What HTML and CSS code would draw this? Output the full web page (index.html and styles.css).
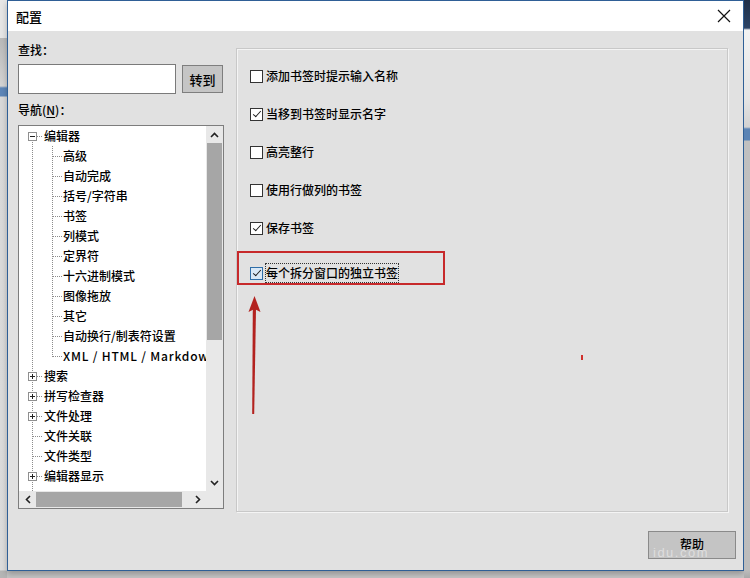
FILE: index.html
```html
<!DOCTYPE html>
<html lang="zh-CN">
  <head>
    <meta charset="UTF-8" />
    <title>配置</title>
    <link rel="stylesheet" href="styles.css">
  </head>
  <body>
    <div class="strip strip-left"></div>

    <div class="dialog">
      <div class="titlebar">
        <span class="title">配置</span>
        <svg class="close" width="14" height="14" viewBox="0 0 14 14">
          <path d="M1 1 L13 13 M13 1 L1 13" stroke="#111" stroke-width="1.2" fill="none" />
        </svg>
      </div>

      <div class="content">
        <div class="side">
          <div class="lbl">查找<span class="colon">：</span></div>
          <div class="search-row">
            <input class="search" type="text" />
            <button class="btn goto">转到</button>
          </div>
          <div class="lbl nav-lbl">导航(<u>N</u>)<span class="colon">：</span></div>

          <div class="treebox">
            <div class="tree">
              <div class="row"><span class="c1 first"><span class="exp minus"></span></span><span class="txt">编辑器</span></div>
              <div class="row"><span class="c1 rail"></span><span class="c2"></span><span class="txt">高级</span></div>
              <div class="row"><span class="c1 rail"></span><span class="c2"></span><span class="txt">自动完成</span></div>
              <div class="row"><span class="c1 rail"></span><span class="c2"></span><span class="txt">括号/字符串</span></div>
              <div class="row"><span class="c1 rail"></span><span class="c2"></span><span class="txt">书签</span></div>
              <div class="row"><span class="c1 rail"></span><span class="c2"></span><span class="txt">列模式</span></div>
              <div class="row"><span class="c1 rail"></span><span class="c2"></span><span class="txt">定界符</span></div>
              <div class="row"><span class="c1 rail"></span><span class="c2"></span><span class="txt">十六进制模式</span></div>
              <div class="row"><span class="c1 rail"></span><span class="c2"></span><span class="txt">图像拖放</span></div>
              <div class="row"><span class="c1 rail"></span><span class="c2"></span><span class="txt">其它</span></div>
              <div class="row"><span class="c1 rail"></span><span class="c2"></span><span class="txt">自动换行/制表符设置</span></div>
              <div class="row"><span class="c1 rail"></span><span class="c2 last"></span><span class="txt latin">XML / HTML / Markdown</span></div>
              <div class="row"><span class="c1"><span class="exp plus"></span></span><span class="txt">搜索</span></div>
              <div class="row"><span class="c1"><span class="exp plus"></span></span><span class="txt">拼写检查器</span></div>
              <div class="row"><span class="c1"><span class="exp plus"></span></span><span class="txt">文件处理</span></div>
              <div class="row"><span class="c1"></span><span class="txt">文件关联</span></div>
              <div class="row"><span class="c1"></span><span class="txt">文件类型</span></div>
              <div class="row"><span class="c1"><span class="exp plus"></span></span><span class="txt">编辑器显示</span></div>
              <div class="row"><span class="c1 rail"></span></div>
            </div>

            <div class="vscroll">
              <span class="sb-btn">
                <svg width="9" height="6" viewBox="0 0 9 6"><path d="M1 5 L4.5 1.5 L8 5" stroke="#222" stroke-width="1.6" fill="none" /></svg>
              </span>
              <span class="v-thumb"></span>
              <span class="sb-track"></span>
              <span class="sb-btn">
                <svg width="9" height="6" viewBox="0 0 9 6"><path d="M1 1 L4.5 4.5 L8 1" stroke="#222" stroke-width="1.6" fill="none" /></svg>
              </span>
            </div>

            <div class="hscroll">
              <span class="sb-btn">
                <svg width="6" height="9" viewBox="0 0 6 9"><path d="M5 1 L1.5 4.5 L5 8" stroke="#222" stroke-width="1.6" fill="none" /></svg>
              </span>
              <span class="h-thumb"></span>
              <span class="sb-track"></span>
              <span class="sb-btn">
                <svg width="6" height="9" viewBox="0 0 6 9"><path d="M1 1 L4.5 4.5 L1 8" stroke="#222" stroke-width="1.6" fill="none" /></svg>
              </span>
            </div>

            <div class="corner"></div>
          </div>
        </div>

        <div class="group">
          <label class="opt"><span class="box"></span>添加书签时提示输入名称</label>
          <label class="opt"><span class="box checked"></span>当移到书签时显示名字</label>
          <label class="opt"><span class="box"></span>高亮整行</label>
          <label class="opt"><span class="box"></span>使用行做列的书签</label>
          <label class="opt"><span class="box checked"></span>保存书签</label>

          <div class="mark">
            <label class="opt focus"><span class="box checked hot"></span><span class="focus-txt">每个拆分窗口的独立书签</span></label>
          </div>

          <svg class="arrow" width="18" height="124" viewBox="0 0 18 124">
            <polygon points="7.5,2 1.5,18 7.5,15 13.5,18" fill="#b3221f" />
            <polygon points="5.8,15 9,15 7.2,120 5.2,120" fill="#b3221f" />
          </svg>
          <span class="dot"></span>
        </div>
      </div>

      <div class="footer">
        <button class="btn help"><span class="wm">idu.com</span><span class="help-txt">帮助</span></button>
      </div>
    </div>

    <div class="strip strip-right"></div>
  </body>
</html>
```

FILE: styles.css
```css
body {
    margin: 0;
    width: 750px;
    height: 578px;
    overflow: hidden;
    display: flex;
    background-color: #c4c4c4;
    font-family: "Noto Sans CJK SC", "Noto Sans", sans-serif;
    font-size: 12px;
    font-weight: 500;
    color: #000;
}

.strip {
    flex: none;
    height: 578px;
}

.strip-left {
    width: 7px;
    background: linear-gradient(to bottom, #e6e6e6 0, #e6e6e6 38px, #b9b9b9 38px, #d4d4d4 86px, #5d86b8 88px, #5d86b8 96px, #d9d9d9 97px, #dcdcdc 570px, #b5b5b5 571px);
}

.strip-right {
    width: 6px;
    background: linear-gradient(to bottom, #1f2f48 0, #2c4466 28px, #f2f2f2 30px, #e4e4e4 100px, #d2d2d2 127px, #5b84b5 129px, #5b84b5 140px, #c0c0c0 141px, #bcbcbc 570px, #a9a9a9 578px);
}

.dialog {
    flex: none;
    width: 737px;
    height: 571px;
    box-sizing: border-box;
    border: 1px solid #2f5f96;
    background-color: #e1e1e1;
    box-shadow: 0 3px 6px rgba(0, 0, 0, 0.25);
    display: flex;
    flex-direction: column;
}

.titlebar {
    height: 30px;
    flex: none;
    background-color: #fff;
    display: flex;
    align-items: center;
    justify-content: space-between;
    padding: 0 12px 0 8px;
}

.title {
    font-size: 13px;
}

.content {
    display: flex;
    gap: 12px;
    padding: 11px 15px 0 10px;
}

/* left column */

.side {
    width: 206px;
    flex: none;
}

.lbl {
    height: 16px;
    line-height: 16px;
}

.colon {
    font-family: "Noto Sans CJK TC", sans-serif;
}

.lbl u {
    text-decoration-thickness: 1px;
    text-underline-offset: 2px;
}

.search-row {
    display: flex;
    align-items: center;
    gap: 6px;
    margin-top: 6px;
}

.search {
    width: 158px;
    height: 30px;
    box-sizing: border-box;
    margin: 0;
    border: 1px solid #7a7a7a;
    background-color: #fff;
}

.btn {
    font-family: inherit;
    font-size: 12px;
    font-weight: 500;
    color: #000;
    background-color: #c5c5c5;
    border: 1px solid #7e7e7e;
    padding: 0;
    margin: 0;
}

.goto {
    width: 41px;
    height: 28px;
    font-size: 13px;
}

.nav-lbl {
    margin-top: 8px;
}

.treebox {
    margin-top: 7px;
    height: 384px;
    box-sizing: border-box;
    border: 1px solid #7d7d7d;
    display: grid;
    grid-template-columns: 187px 17px;
    grid-template-rows: 365px 17px;
}

.tree {
    background-color: #fff;
    overflow: hidden;
    white-space: nowrap;
}

.row {
    height: 20px;
    display: flex;
    align-items: center;
}

.txt {
    line-height: 20px;
}

.latin {
    letter-spacing: 0.8px;
}

.c1,
.c2 {
    flex: none;
    height: 20px;
    display: flex;
    align-items: center;
    background-repeat: no-repeat;
}

.c1 {
    width: 25px;
    background-image:
        repeating-linear-gradient(to right, #8c8c8c 0 1px, transparent 1px 2px),
        repeating-linear-gradient(to bottom, #8c8c8c 0 1px, transparent 1px 2px);
    background-size: 9px 1px, 1px 20px;
    background-position: 14px 10px, 13px 0;
}

.c1.first {
    background-size: 9px 1px, 1px 10px;
    background-position: 14px 10px, 13px 10px;
}

.c1.rail {
    background-size: 0 0, 1px 20px;
}

.c2 {
    width: 19px;
    background-image:
        repeating-linear-gradient(to right, #8c8c8c 0 1px, transparent 1px 2px),
        repeating-linear-gradient(to bottom, #8c8c8c 0 1px, transparent 1px 2px);
    background-size: 9px 1px, 1px 20px;
    background-position: 9px 10px, 8px 0;
}

.c2.last {
    background-size: 9px 1px, 1px 11px;
}

.exp {
    width: 9px;
    height: 9px;
    box-sizing: border-box;
    margin-left: 9px;
    border: 1px solid #8f8f8f;
    background-color: #fff;
    display: flex;
    align-items: center;
    justify-content: center;
    position: relative;
}

.exp::before {
    content: "";
    width: 5px;
    height: 1px;
    background-color: #222;
}

.exp.plus::after {
    content: "";
    position: absolute;
    left: 3px;
    top: 1px;
    width: 1px;
    height: 5px;
    background-color: #222;
}

/* scrollbars */

.vscroll,
.hscroll {
    background-color: #e8e8e8;
    display: flex;
}

.vscroll {
    flex-direction: column;
}

.sb-btn {
    flex: none;
    width: 17px;
    height: 17px;
    display: flex;
    align-items: center;
    justify-content: center;
}

.sb-track {
    flex: 1;
}

.v-thumb {
    flex: none;
    height: 197px;
    margin: 0 1px;
    background-color: #a6a6a6;
}

.h-thumb {
    flex: none;
    width: 146px;
    margin: 1px 0;
    background-color: #a6a6a6;
}

.corner {
    background-color: #e8e8e8;
}

/* options group */

.group {
    margin-top: 6px;
    width: 492px;
    height: 464px;
    box-sizing: border-box;
    border: 1px solid #c8c8c8;
    box-shadow: inset 1px 1px 0 #f4f4f4, 1px 1px 0 #f4f4f4;
    padding: 17px 0 0 13px;
    display: flex;
    flex-direction: column;
    align-items: flex-start;
    position: relative;
}

.opt {
    height: 20px;
    margin-bottom: 18px;
    display: flex;
    align-items: center;
    gap: 3px;
    line-height: 20px;
}

.box {
    width: 13px;
    height: 13px;
    box-sizing: border-box;
    border: 1px solid #333;
    background-color: #fff;
    display: flex;
    align-items: center;
    justify-content: center;
}

.box.checked::before {
    content: "";
    width: 7px;
    height: 3px;
    margin-top: -3px;
    border-left: 1.5px solid #1a1a1a;
    border-bottom: 1.5px solid #1a1a1a;
    transform: rotate(-48deg);
}

.box.hot {
    border-color: #2f6ea8;
    background-color: #d9e8f6;
}

.mark {
    margin: -5px 0 0 -13px;
    width: 208px;
    height: 34px;
    box-sizing: border-box;
    border: 2px solid #c7292b;
    padding: 10px 0 0 11px;
}

.mark .opt {
    margin-bottom: 0;
}

.focus-txt {
    outline: 1px dotted #333;
    line-height: 18px;
}

.arrow {
    position: absolute;
    left: 10px;
    top: 245px;
}

.dot {
    position: absolute;
    left: 344px;
    top: 306px;
    width: 2px;
    height: 5px;
    background-color: #d0302c;
}

/* footer */

.footer {
    display: flex;
    justify-content: flex-end;
    padding: 19px 7px 0 0;
}

.help {
    width: 88px;
    height: 28px;
    position: relative;
    text-align: left;
    padding: 0 0 0 31px;
    background-color: #c4c4c4;
    border-color: #8a8a8a;
}

.help-txt {
    position: relative;
    top: -2px;
}

.wm {
    position: absolute;
    left: 4px;
    top: 15px;
    font-family: "Liberation Sans", sans-serif;
    font-size: 13px;
    line-height: 11px;
    font-weight: 400;
    letter-spacing: 1.5px;
    color: rgba(240, 240, 240, 0.6);
}
```
